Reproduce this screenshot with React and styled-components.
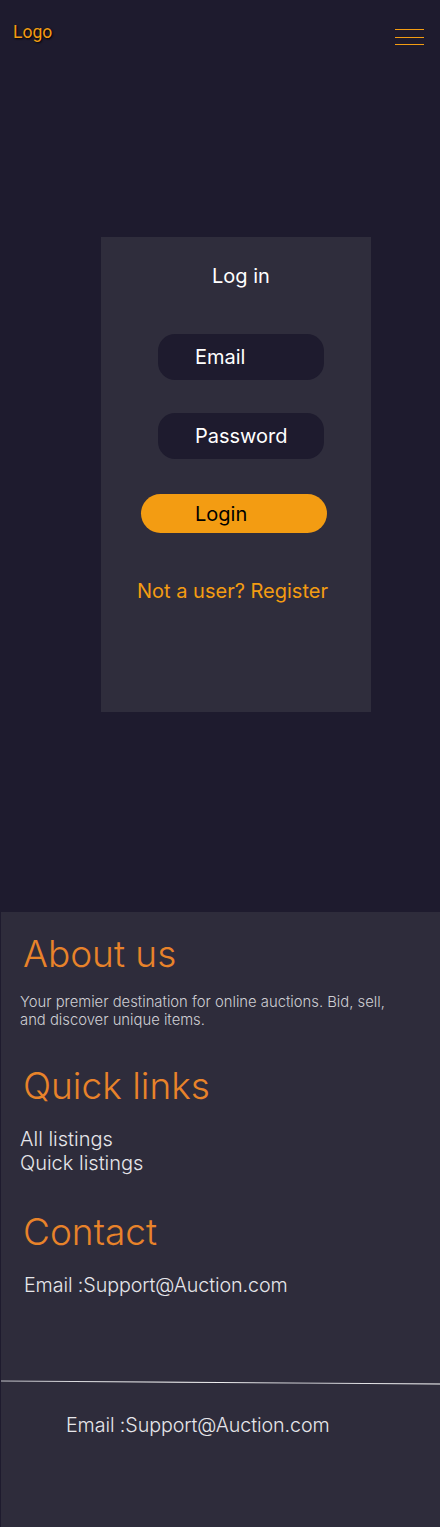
import styled, { createGlobalStyle } from "styled-components";

const GlobalStyle = createGlobalStyle`
  html, body {
    margin: 0;
    padding: 0;
    background: #1e1b2e;
    font-family: Inter, "Noto Sans", sans-serif;
  }
  * { box-sizing: border-box; }
`;

const Page = styled.div`
  width: 440px;
  min-height: 1527px;
  display: flex;
  flex-direction: column;
  background: #1e1b2e;
`;

const Header = styled.header`
  height: 66px;
  display: flex;
  justify-content: space-between;
  align-items: flex-start;
  padding: 22px 16px 0 13px;
`;

const Logo = styled.div`
  font-family: Roboto, "Liberation Sans", sans-serif;
  font-size: 17.5px;
  line-height: 20px;
  color: #f39c12;
  text-shadow: 1px 1px 2px #000;
`;

const Burger = styled.button`
  width: 29px;
  margin-top: 7px;
  padding: 0;
  border: none;
  background: transparent;
  display: flex;
  flex-direction: column;
  gap: 6.5px;
  cursor: pointer;
`;

const BurgerLine = styled.span`
  display: block;
  height: 1px;
  background: #f39c12;
`;

const Main = styled.main`
  height: 846px;
  padding-top: 171px;
`;

const Card = styled.div`
  width: 270px;
  height: 475px;
  margin-left: 101px;
  padding-top: 27px;
  background: #2f2d3c;
  display: flex;
  flex-direction: column;
  align-items: flex-start;
`;

const Title = styled.h1`
  margin: 0 0 46px 111px;
  font-size: 20px;
  line-height: 24px;
  font-weight: 400;
  color: #fff;
`;

const Field = styled.input`
  width: 166px;
  height: 46px;
  margin: 0 0 ${(p) => p.$gap}px 57px;
  padding: 0 0 0 37px;
  border: none;
  border-radius: 17px;
  background: #1e1b2e;
  font-family: Inter, "Noto Sans", sans-serif;
  font-size: 20px;
  font-weight: 400;
  color: #fff;
  outline: none;
  &::placeholder {
    color: #fff;
    opacity: 1;
  }
`;

const LoginButton = styled.button`
  width: 186px;
  height: 39px;
  margin: 0 0 46px 40px;
  padding: 0 0 0 54px;
  border: none;
  border-radius: 20px;
  background: #f39c12;
  text-align: left;
  font-family: Inter, "Noto Sans", sans-serif;
  font-size: 20px;
  font-weight: 400;
  color: #000;
  cursor: pointer;
`;

const RegisterLink = styled.a`
  margin-left: 36px;
  font-size: 20px;
  line-height: 24px;
  font-weight: 400;
  color: #f39c12;
  text-decoration: none;
  cursor: pointer;
`;

const Footer = styled.footer`
  flex: 1;
  margin-left: 1px;
  padding: 20px 20px 0 19px;
  background: #2e2c3b;
  display: flex;
  flex-direction: column;
  align-items: flex-start;
`;

const FooterHeading = styled.h2`
  margin: 0 0 ${(p) => p.$gap}px 3px;
  font-family: "Inter Light", Inter, "Noto Sans", sans-serif;
  font-size: 37px;
  line-height: 44px;
  font-weight: 300;
  color: #e8832a;
`;

const About = styled.p`
  max-width: 372px;
  margin: 0 0 35px;
  font-family: "Inter Light", Inter, "Noto Sans", sans-serif;
  font-size: 14.8px;
  line-height: 18px;
  font-weight: 300;
  color: #cfcfd4;
`;

const LinkList = styled.div`
  display: flex;
  flex-direction: column;
  margin-bottom: 35px;
`;

const FooterLink = styled.a`
  font-family: "Inter Light", Inter, "Noto Sans", sans-serif;
  font-size: 20px;
  line-height: 23.5px;
  font-weight: 300;
  color: #e6e6ea;
  text-decoration: none;
`;

const ContactLine = styled.div`
  margin-left: ${(p) => p.$indent}px;
  font-family: "Inter Light", Inter, "Noto Sans", sans-serif;
  font-size: 19.7px;
  line-height: 24px;
  font-weight: 300;
  letter-spacing: -0.1px;
  color: #e6e6ea;
`;

const Divider = styled.div`
  align-self: stretch;
  margin: 85px -20px 30px -19px;
  height: 1px;
  background: linear-gradient(90deg, #bdbdc4, #ffffff 40%, #c9c9cf 70%, #ffffff);
  transform: rotate(0.39deg);
`;

export default function App() {
  return (
    <Page>
      <GlobalStyle />
      <Header>
        <Logo>Logo</Logo>
        <Burger aria-label="Menu">
          <BurgerLine />
          <BurgerLine />
          <BurgerLine />
        </Burger>
      </Header>
      <Main>
        <Card>
          <Title>Log in</Title>
          <Field type="email" placeholder="Email" $gap={33} />
          <Field type="password" placeholder="Password" $gap={35} />
          <LoginButton>Login</LoginButton>
          <RegisterLink>Not a user? Register</RegisterLink>
        </Card>
      </Main>
      <Footer>
        <FooterHeading $gap={17}>About us</FooterHeading>
        <About>
          Your premier destination for online auctions. Bid, sell, and discover unique items.
        </About>
        <FooterHeading $gap={20}>Quick links</FooterHeading>
        <LinkList>
          <FooterLink>All listings</FooterLink>
          <FooterLink>Quick listings</FooterLink>
        </LinkList>
        <FooterHeading $gap={19}>Contact</FooterHeading>
        <ContactLine $indent={4}>Email :Support@Auction.com</ContactLine>
        <Divider />
        <ContactLine $indent={46}>Email :Support@Auction.com</ContactLine>
      </Footer>
    </Page>
  );
}
